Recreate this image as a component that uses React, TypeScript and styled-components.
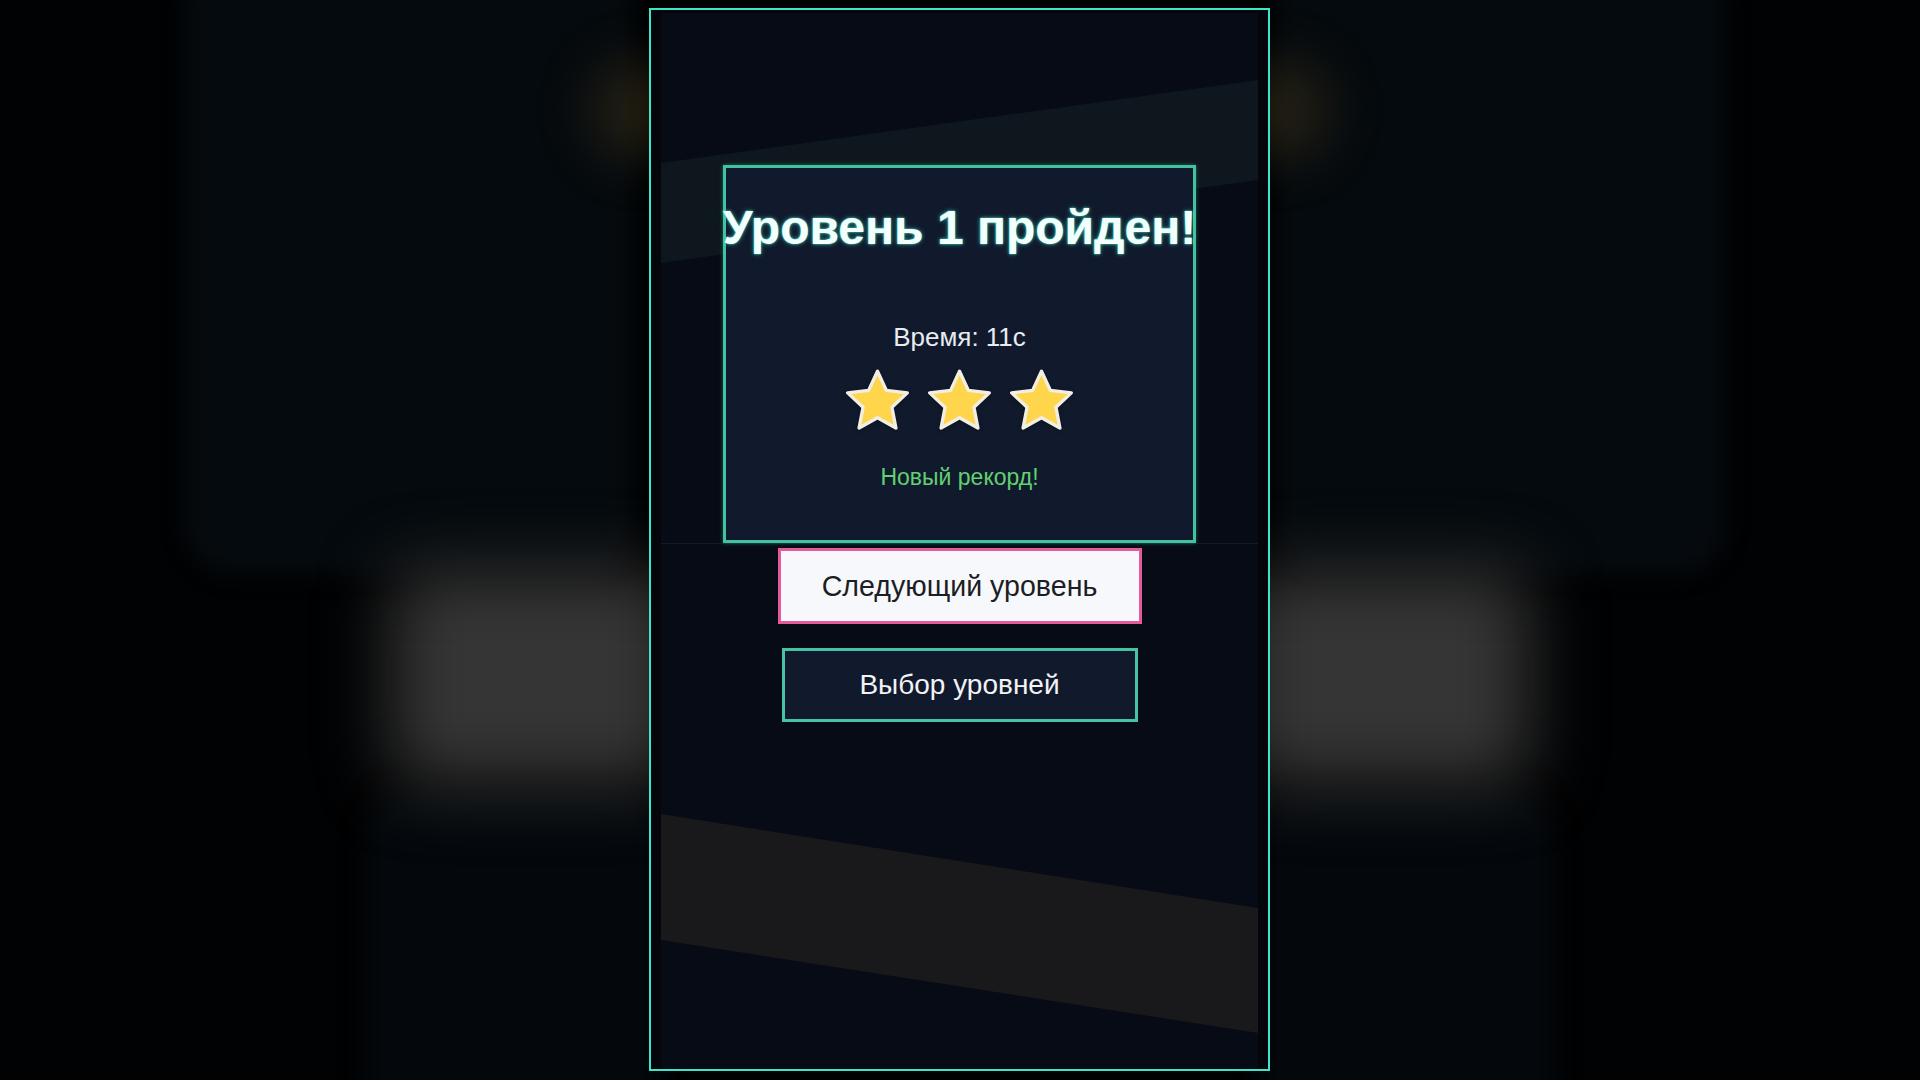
import { createGlobalStyle, styled } from "styled-components";

const GlobalStyle = createGlobalStyle`
  html, body {
    margin: 0;
    padding: 0;
    background: #000;
  }
  body {
    font-family: "Liberation Sans", Arial, sans-serif;
    overflow: hidden;
  }
`;

type Side = { $side: "left" | "right" };

const Screen = styled.div`
  position: relative;
  width: 100vw;
  height: 100vh;
  overflow: hidden;
  display: flex;
  justify-content: center;
  padding: 8px 1px 0 0;
  box-sizing: border-box;
  background: #010203;
`;

// blurred copy of the scene behind the game frame
const ShadeTop = styled.div<Side>`
  position: absolute;
  top: -40px;
  ${({ $side }) => ($side === "left" ? "left: 184px;" : "right: 194px;")}
  width: 450px;
  height: 615px;
  border-radius: 48px;
  background: #050a0e;
  filter: blur(10px);
`;

const ShadeBottom = styled.div<Side>`
  position: absolute;
  top: 790px;
  ${({ $side }) => ($side === "left" ? "left: 367px;" : "right: 367px;")}
  width: 290px;
  height: 330px;
  border-radius: 40px;
  background: #04080c;
  filter: blur(12px);
`;

const GreyHaze = styled.div<Side>`
  position: absolute;
  top: 570px;
  ${({ $side }) => ($side === "left" ? "left: 390px;" : "right: 390px;")}
  width: 290px;
  height: 215px;
  border-radius: 30px;
  background: #353535;
  filter: blur(34px);
`;

const WarmGlow = styled.div<Side>`
  position: absolute;
  top: 60px;
  ${({ $side }) => ($side === "left" ? "left: 590px;" : "right: 590px;")}
  width: 100px;
  height: 100px;
  border-radius: 50%;
  background: rgba(110, 90, 40, 0.28);
  filter: blur(26px);
`;

const Frame = styled.div`
  position: relative;
  z-index: 1;
  width: 621px;
  height: 1063px;
  box-sizing: border-box;
  border: 2px solid #3fe5cb;
  padding: 3px 10px 1px 10px;
  background: #04060b;
`;

const Game = styled.div`
  position: relative;
  width: 100%;
  height: 100%;
  background: #070b15;
  display: flex;
  flex-direction: column;
`;

const Stripes = styled.svg`
  position: absolute;
  inset: 0;
  width: 100%;
  height: 100%;
  z-index: 0;
`;

const Scene = styled.div`
  position: relative;
  z-index: 1;
  height: 531px;
  box-sizing: border-box;
  border-bottom: 1px solid #141a25;
  display: flex;
  justify-content: center;
  align-items: flex-end;
`;

const Panel = styled.div`
  width: 473px;
  height: 378px;
  box-sizing: border-box;
  border: 3px solid #41c3a2;
  box-shadow: 0 0 4px rgba(65, 195, 162, 0.45);
  background: #111a2c;
  display: flex;
  flex-direction: column;
  align-items: center;
  padding-top: 32px;
`;

const Title = styled.h1`
  margin: 0;
  font-size: 48px;
  font-weight: 700;
  line-height: 56px;
  white-space: nowrap;
  color: #f2fffc;
  text-shadow: 0 0 2px #3fe3cb, 0 0 5px rgba(63, 227, 203, 0.55);
`;

const Time = styled.div`
  margin-top: 66px;
  font-size: 26px;
  line-height: 31px;
  color: #e8ebf0;
`;

const Stars = styled.div`
  display: flex;
  gap: 15px;
  margin-top: 15px;
`;

const StarIcon = styled.svg`
  width: 67px;
  height: 65px;
  filter: drop-shadow(0 1px 2px rgba(0, 0, 0, 0.35));
`;

const Record = styled.div`
  margin-top: 30px;
  font-size: 23px;
  line-height: 28px;
  color: #61d173;
`;

const Actions = styled.div`
  position: relative;
  z-index: 1;
  display: flex;
  flex-direction: column;
  align-items: center;
  gap: 24px;
  padding-top: 4px;
`;

const Button = styled.button<{ $primary?: boolean }>`
  box-sizing: border-box;
  width: ${({ $primary }) => ($primary ? "364px" : "356px")};
  height: ${({ $primary }) => ($primary ? "76px" : "74px")};
  border: 3px solid ${({ $primary }) => ($primary ? "#e45b9d" : "#45c4a3")};
  background: ${({ $primary }) => ($primary ? "#f7f8fb" : "#111a2d")};
  color: ${({ $primary }) => ($primary ? "#1d1e24" : "#f1f3f6")};
  font-family: "Liberation Sans", Arial, sans-serif;
  font-size: ${({ $primary }) => ($primary ? "28.6px" : "28px")};
  cursor: pointer;
  padding: 0;
`;

const Star = () => (
  <StarIcon viewBox="0 0 64 62">
    <polygon
      points="32,3 40.5,21.3 60.5,23.7 45.8,37.5 49.6,57.3 32,47.5 14.4,57.3 18.2,37.5 3.5,23.7 23.5,21.3"
      fill="#ffd54c"
      stroke="#f1eee6"
      strokeWidth="3.2"
      strokeLinejoin="round"
    />
  </StarIcon>
);

export default function App() {
  return (
    <>
      <GlobalStyle />
      <Screen>
        <ShadeTop $side="left" />
        <ShadeTop $side="right" />
        <ShadeBottom $side="left" />
        <ShadeBottom $side="right" />
        <GreyHaze $side="left" />
        <GreyHaze $side="right" />
        <WarmGlow $side="left" />
        <WarmGlow $side="right" />

        <Frame>
          <Game>
            <Stripes viewBox="0 0 597 1055" preserveAspectRatio="none">
              <polygon points="0,150 597,67 597,167 0,250" fill="#0e171d" />
              <polygon points="0,801 597,895 597,1020 0,927" fill="#19181b" />
            </Stripes>

            <Scene>
              <Panel>
                <Title>Уровень 1 пройден!</Title>
                <Time>Время: 11с</Time>
                <Stars>
                  <Star />
                  <Star />
                  <Star />
                </Stars>
                <Record>Новый рекорд!</Record>
              </Panel>
            </Scene>

            <Actions>
              <Button $primary>Следующий уровень</Button>
              <Button>Выбор уровней</Button>
            </Actions>
          </Game>
        </Frame>
      </Screen>
    </>
  );
}
